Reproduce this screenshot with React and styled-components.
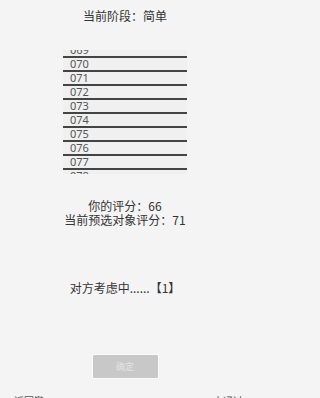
import React, { useEffect, useRef } from "react";
import styled, { createGlobalStyle } from "styled-components";

const GlobalStyle = createGlobalStyle`
  html, body {
    margin: 0;
    padding: 0;
    background: #f4f4f4;
  }
  body {
    font-family: "Noto Sans CJK SC", "Noto Sans", sans-serif;
    color: #333;
  }
`;

const Screen = styled.div`
  width: 250px;
  height: 398px;
  overflow: hidden;
  display: flex;
  flex-direction: column;
  align-items: center;

  & > * {
    flex-shrink: 0;
  }
`;

const Title = styled.div`
  margin-top: 9px;
  font-size: 12px;
  line-height: 14px;
`;

const Picker = styled.div`
  margin-top: 27px;
  width: 124px;
  height: 124px;
  overflow: hidden;
  background: #f0f0f0;
`;

const Row = styled.div`
  box-sizing: border-box;
  height: 14px;
  padding-left: 7px;
  border-bottom: 2px solid #444;
  font-family: "Noto Sans", sans-serif;
  font-size: 11px;
  line-height: 12px;
  color: #555;
`;

const Scores = styled.div`
  margin-top: 25px;
  font-size: 12px;
  line-height: 14px;
  text-align: center;
`;

const Waiting = styled.div`
  margin-top: 54px;
  font-size: 12px;
  line-height: 14px;
`;

const ConfirmButton = styled.button`
  margin-top: 60px;
  width: 65px;
  height: 23px;
  padding: 0;
  border: none;
  border-radius: 1px;
  background: #c8c8c8;
  box-shadow: 0 0 0 1px #fbfbfb;
  color: #e4e4e4;
  font-family: inherit;
  font-size: 9px;
`;

const Footer = styled.div`
  margin-top: 17px;
  width: 100%;
  box-sizing: border-box;
  padding: 0 7px 0 14px;
  display: flex;
  justify-content: space-between;
  font-size: 10px;
  line-height: 12px;
  color: #555;
`;

const numbers = Array.from({ length: 14 }, (_, i) => String(66 + i).padStart(3, "0"));

function App() {
  const pickerRef = useRef(null);

  useEffect(() => {
    // 069 sits half out of view at the top
    if (pickerRef.current) pickerRef.current.scrollTop = 3 * 14 + 6;
  }, []);

  return (
    <Screen>
      <GlobalStyle />
      <Title>当前阶段：简单</Title>
      <Picker ref={pickerRef}>
        {numbers.map((n) => (
          <Row key={n}>{n}</Row>
        ))}
      </Picker>
      <Scores>
        <div>你的评分：66</div>
        <div>当前预选对象评分：71</div>
      </Scores>
      <Waiting>对方考虑中......【1】</Waiting>
      <ConfirmButton disabled>确定</ConfirmButton>
      <Footer>
        <span>返回键</span>
        <span>未通过</span>
      </Footer>
    </Screen>
  );
}

export default App;
